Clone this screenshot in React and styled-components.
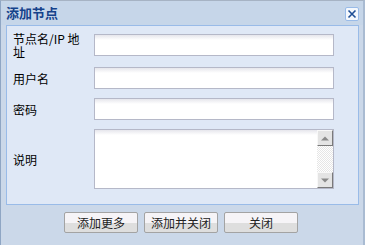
import React from 'react';
import styled, { createGlobalStyle } from 'styled-components';

const Global = createGlobalStyle`
  html, body { margin: 0; padding: 0; background: #cbd8e9; }
  * { box-sizing: border-box; }
`;

const FONT = `"Noto Sans CJK SC", "DejaVu Sans", sans-serif`;

const Window = styled.div`
  width: 365px;
  height: 245px;
  background: #cbd8e9;
  border-left: 1px solid #8fa6c4;
  border-top: 1px solid #a6b3c4;
  border-right: 2px solid #a9bbd2;
  display: flex;
  flex-direction: column;
  font-family: ${FONT};
`;

const Header = styled.div`
  height: 24px;
  background: #c6d6e9;
  display: flex;
  align-items: center;
  justify-content: space-between;
  padding: 0 4px 2px 5px;
`;

const Title = styled.span`
  font-size: 13px;
  font-weight: bold;
  color: #15428b;
  line-height: 13px;
`;

const CloseBtn = styled.div`
  width: 14px;
  height: 14px;
  margin-top: 4px;
  border: 1px solid #99bbe8;
  border-radius: 2px;
  background: #f4f8fd;
  display: flex;
  align-items: center;
  justify-content: center;
`;

const Body = styled.div`
  margin: 0 4px 0 5px;
  height: 180px;
  border: 1px solid #99bbe8;
  background: #dfe8f6;
  padding: 6px 0 0 6px;
  display: flex;
  flex-direction: column;
`;

const Row = styled.div`
  display: flex;
  align-items: center;
  height: ${p => p.h}px;
  margin-bottom: ${p => p.mb}px;
`;

const Label = styled.label`
  width: 72px;
  margin-right: 9px;
  font-size: 12px;
  line-height: 13px;
  color: #000;
`;

const Input = styled.div`
  width: 240px;
  height: 22px;
  border: 1px solid #b5b8c8;
  background: linear-gradient(#e6e6ec, #ffffff 5px);
`;

const TextArea = styled.div`
  width: 240px;
  height: 60px;
  border: 1px solid #b5b8c8;
  background: linear-gradient(#e6e6ec, #ffffff 5px);
  display: flex;
  justify-content: flex-end;
`;

const ScrollBar = styled.div`
  width: 16px;
  height: 100%;
  display: flex;
  flex-direction: column;
  background: repeating-conic-gradient(#e6e6e6 0 25%, #ffffff 0 50%) 0 0 / 2px 2px;
`;

const ScrollBtn = styled.div`
  width: 16px;
  height: 16px;
  background: #e4e4e4;
  border-top: 1px solid #f8f8f8;
  border-left: 1px solid #f8f8f8;
  border-right: 1px solid #7a7a7a;
  border-bottom: 1px solid #7a7a7a;
  display: flex;
  align-items: center;
  justify-content: center;
`;

const Track = styled.div`
  flex: 1;
`;

const Footer = styled.div`
  display: flex;
  justify-content: center;
  gap: 6px;
  padding: 7px 2px 0 0;
`;

const Button = styled.div`
  width: 74px;
  height: 21px;
  border: 1px solid #a3a3a3;
  border-radius: 2px;
  background: linear-gradient(#f6f4f7 0, #f6f4f7 55%, #dedede 55%, #dedede 100%);
  font-size: 12px;
  color: #222;
  display: flex;
  align-items: center;
  justify-content: center;
`;

const Arrow = ({ up }) => (
  <svg width="8" height="5" viewBox="0 0 8 5">
    <path d={up ? 'M0 4.5 L4 0.5 L8 4.5 Z' : 'M0 0.5 L4 4.5 L8 0.5 Z'} fill="#8a8a8a" />
  </svg>
);

export default function App() {
  return (
    <>
      <Global />
      <Window>
        <Header>
          <Title>添加节点</Title>
          <CloseBtn>
            <svg width="10" height="10" viewBox="0 0 10 10">
              <path d="M1.5 1.5 L8.5 8.5 M8.5 1.5 L1.5 8.5" stroke="#1f4f96" strokeWidth="1.6" />
            </svg>
          </CloseBtn>
        </Header>
        <Body>
          <Row h={26} mb={9}>
            <Label>节点名/IP 地址</Label>
            <Input />
          </Row>
          <Row h={22} mb={9}>
            <Label>用户名</Label>
            <Input />
          </Row>
          <Row h={22} mb={9}>
            <Label>密码</Label>
            <Input />
          </Row>
          <Row h={60} mb={0}>
            <Label>说明</Label>
            <TextArea>
              <ScrollBar>
                <ScrollBtn><Arrow up /></ScrollBtn>
                <Track />
                <ScrollBtn><Arrow /></ScrollBtn>
              </ScrollBar>
            </TextArea>
          </Row>
        </Body>
        <Footer>
          <Button>添加更多</Button>
          <Button>添加并关闭</Button>
          <Button>关闭</Button>
        </Footer>
      </Window>
    </>
  );
}
